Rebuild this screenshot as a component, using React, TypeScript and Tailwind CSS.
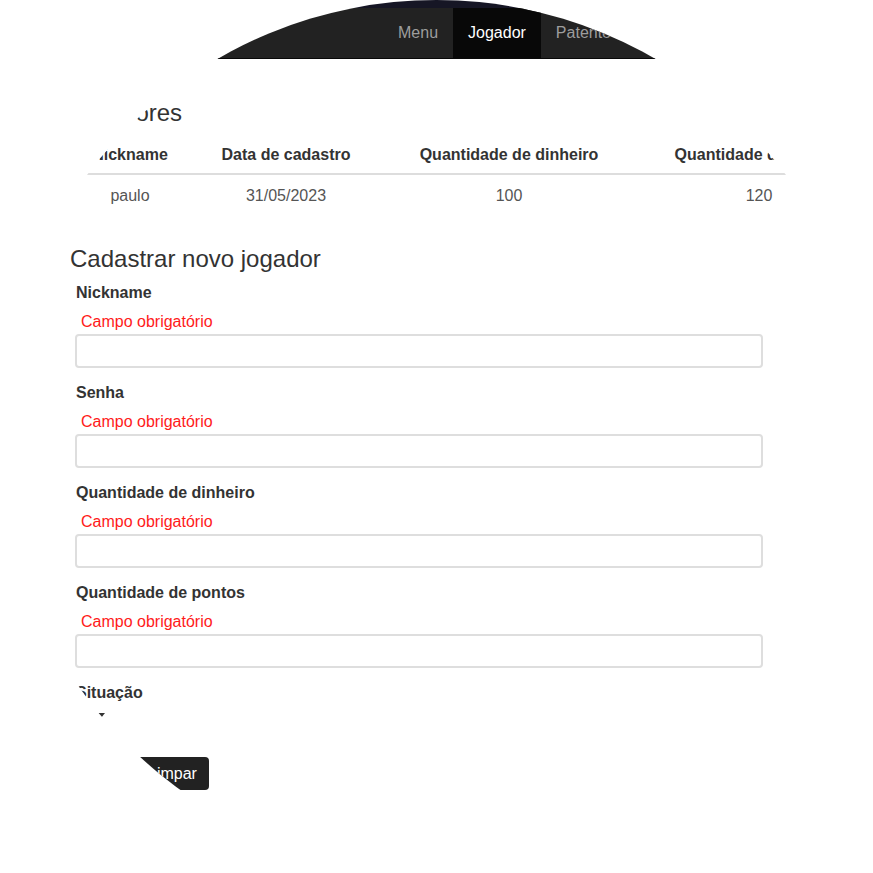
import React from "react";

const fields = [
  "Nickname",
  "Senha",
  "Quantidade de dinheiro",
  "Quantidade de pontos",
];

const columns = [
  { label: "Nickname", w: "w-[120px]" },
  { label: "Data de cadastro", w: "w-[192px]" },
  { label: "Quantidade de dinheiro", w: "w-[254px]" },
  { label: "Quantidade de pontos", w: "w-[246px]" },
];

const rows = [["paulo", "31/05/2023", "100", "120"]];

export default function App() {
  return (
    <div className="w-[873px] h-[873px] overflow-hidden bg-white [clip-path:circle(50%)] font-['Liberation_Sans',Arial,sans-serif] text-[16px] text-[#333]">
      <div className="h-[8px] bg-[#161625]" />

      <nav className="h-[51px] bg-[#222] border-b border-[#080808] flex">
        <div className="w-[383px] flex items-center pl-[75px] text-[#9d9d9d] text-[18px]">
          Jogo
        </div>
        <ul className="flex h-[50px]">
          <li className="px-[15px] leading-[50px] text-[#9d9d9d]">Menu</li>
          <li className="px-[15px] leading-[50px] bg-[#080808] text-white">Jogador</li>
          <li className="px-[15px] leading-[50px] text-[#9d9d9d]">Patente</li>
        </ul>
      </nav>

      <main className="pl-[70px]">
        <h2 className="mt-[40px] text-[24px] leading-[28px]">Jogadores</h2>

        <table className="mt-[10px] table-fixed w-[812px] border-collapse">
          <thead>
            <tr className="border-b-2 border-[#ddd]">
              {columns.map((c) => (
                <th key={c.label} className={`${c.w} pt-[8px] pb-[8px] leading-[20px] font-bold text-center whitespace-nowrap`}>
                  {c.label}
                </th>
              ))}
            </tr>
          </thead>
          <tbody>
            {rows.map((r) => (
              <tr key={r[0]}>
                {r.map((v, i) => (
                  <td key={i} className="pt-[11px] pb-[8px] leading-[20px] text-center text-[#555]">
                    {v}
                  </td>
                ))}
              </tr>
            ))}
          </tbody>
        </table>

        <h3 className="mt-[31px] text-[24px] leading-[28px]">Cadastrar novo jogador</h3>

        <form className="ml-[5px] w-[688px] mt-[10px]">
          {fields.map((f) => (
            <div key={f} className="mb-[15px]">
              <label className="block pl-[1px] leading-[20px] font-bold">{f}</label>
              <div className="mt-[9px] pl-[6px] leading-[20px] text-[#ff1a1a]">Campo obrigatório</div>
              <input
                type="text"
                className="mt-[2px] block w-full h-[34px] rounded-[4px] border-2 border-[#dedede] bg-white px-[10px] outline-none"
              />
            </div>
          ))}

          <div>
            <label className="block pl-[1px] leading-[20px] font-bold">Situação</label>
            <div className="mt-[3px] h-[20px] w-[34px] flex items-center justify-end pr-[4px]">
              <svg width="8" height="6" viewBox="0 0 8 6">
                <path d="M0 0 L8 0 L4 5 Z" fill="#333" />
              </svg>
            </div>
          </div>

          <div className="mt-[31px] flex gap-[4px]">
            <button type="button" className="w-[57px] h-[33px] rounded-[4px] bg-[#222] text-white text-[14px]">
              Salvar
            </button>
            <button type="button" className="h-[33px] px-[12px] rounded-[4px] bg-[#222] text-white">
              Limpar
            </button>
          </div>
        </form>
      </main>
    </div>
  );
}
